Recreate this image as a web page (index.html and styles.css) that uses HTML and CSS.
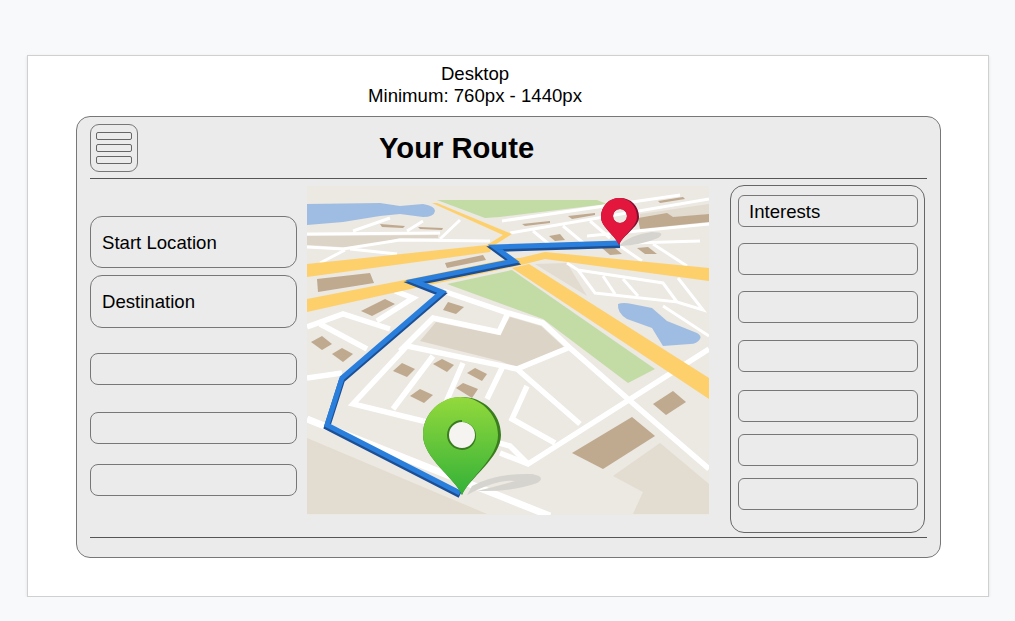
FILE: index.html
```html
<!DOCTYPE html>
<html lang="en">
<head>
    <meta charset="UTF-8">
    <title>Your Route - Desktop</title>
    <link rel="stylesheet" href="styles.css">
</head>
<body>
    <div class="sheet">
        <div class="caption">
            <div>Desktop</div>
            <div>Minimum: 760px - 1440px</div>
        </div>

        <div class="frame">
            <div class="header">
                <div class="menu-btn">
                    <span></span>
                    <span></span>
                    <span></span>
                </div>
                <h1>Your Route</h1>
            </div>

            <div class="main">
                <div class="left-col">
                    <div class="field tall">Start Location</div>
                    <div class="field tall">Destination</div>
                    <div class="field"></div>
                    <div class="field"></div>
                    <div class="field"></div>
                </div>

                <svg class="map" viewBox="0 0 402 329" width="402" height="329">
                    <defs>
                        <linearGradient id="green-pin" x1="0" y1="0" x2="0" y2="1">
                            <stop offset="0" stop-color="#93d93c"/>
                            <stop offset="1" stop-color="#33b138"/>
                        </linearGradient>
                    </defs>
                    <rect width="402" height="329" fill="#ece8e2"/>

                    <!-- water, parks, ground -->
                    <path fill="#9fbde2" d="M0 18 L73 17 L93 20 L116 18 Q128 20 128 25 Q127 31 116 31 L93 28 L73 30 L36 36 L0 39Z"/>
                    <path fill="#9fbde2" d="M311 118 Q316 116 325 118 L345 122 L360 135 L390 147 Q395 150 393 153 Q390 158 383 158 L356 160 L345 142 L320 133 Q310 127 311 118Z"/>
                    <path fill="#c3dca5" d="M130 14 L290 14 L300 18 L193 31 L178 32Z"/>
                    <path fill="#c3dca5" d="M140 98 L205 84 L348 183 L321 197 L236 133Z"/>
                    <path fill="#e3dcd0" d="M0 252 L180 328 L0 328Z"/>
                    <path fill="#e3dcd0" d="M306 290 L353 257 L402 298 L402 328 L326 328 L336 306Z"/>
                    <path fill="#ddd4c8" d="M0 50 L131 49 L131 52 L93 52 L50 62 L0 59Z"/>
                    <path fill="#ddd4c8" d="M113 155 L129 136 L192 149 L203 131 L234 140 L258 162 L210 182 L193 175Z"/>
                    <path fill="#e2dbd0" d="M228 78 L260 77 L280 110Z"/>
                    <path fill="#e2dbd0" d="M333 28 L402 18 L402 28 L333 36Z"/>

                    <!-- streets -->
                    <g fill="none" stroke="#fff" stroke-width="3">
                        <path d="M0 48 L133 47 M46 45 L83 32 M100 45 L116 35 M133 53 L153 34 M13 77 L38 64 M43 63 L90 68"/>
                        <path d="M0 61 L36 63 L93 54 L183 55"/>
                        <path d="M195 35 L373 9 M203 47 L402 13 M226 45 L248 63 M256 40 L280 60 M283 35 L303 52 M280 50 L402 38 M326 57 L393 55 M313 60 L335 75 M346 58 L380 80"/>
                        <path d="M271 84 L356 97 L370 116 L288 107Z M296 90 L308 108 M316 93 L331 110 M370 116 L396 124 L371 92 M356 120 L402 150 M260 77 L271 84"/>
                    </g>
                    <g fill="none" stroke="#fff" stroke-width="5.5">
                        <path d="M0 141 L36 128 L83 143 M13 138 L60 163 M70 135 L106 112 L88 105"/>
                        <path d="M93 165 L126 132 L192 146 L201 127 M136 105 L201 127 L236 137 L263 162 L321 213 L402 283"/>
                        <path d="M402 163 L221 278 L193 267 M100 160 L210 183 L273 238 M220 200 L205 233 L248 257 M210 183 L261 162"/>
                        <path d="M100 160 L46 218 L116 235 M126 170 L86 223 M156 177 L133 230 M196 180 L180 213 M0 192 L35 187"/>
                        <path d="M116 235 L203 260 L221 278"/>
                    </g>
                    <path fill="none" stroke="#fff" stroke-width="7" d="M0 233 L243 330"/>

                    <!-- main roads -->
                    <g fill="#fdd06c">
                        <path d="M125 17 L130 17 L205 48 L186 60 L183 66 L0 91 L0 78 L180 59 L196 49Z"/>
                        <path d="M0 113 L103 93 L205 72 L213 72 L238 66 L402 82 L402 95 L238 73 L210 80 L108 102 L0 126Z"/>
                        <path d="M205 82 L222 78 L402 192 L402 213Z"/>
                    </g>

                    <!-- blocks -->
                    <g fill="#bfa98f">
                        <path d="M138 77 L176 69 L179 74 L140 82Z"/>
                        <path d="M10 93 L63 87 L67 97 L11 106Z"/>
                        <path d="M54 125 L78 113 L88 118 L65 130Z"/>
                        <path d="M141 116 L157 121 L149 128 L136 124Z"/>
                        <path d="M4 156 L15 150 L25 158 L15 164Z"/>
                        <path d="M25 168 L35 162 L46 168 L36 176Z"/>
                        <path d="M73 38 L98 40 L96 42 L75 41Z"/>
                        <path d="M111 41 L136 42 L135 44 L113 43Z"/>
                        <path d="M215 38 L243 35 L243 37 L218 40Z"/>
                        <path d="M261 30 L288 27 L288 29 L265 33Z"/>
                        <path d="M351 15 L376 11 L378 13 L353 17Z"/>
                        <path d="M242 50 L253 48 L258 54 L248 55Z"/>
                        <path d="M295 62 L308 62 L315 68 L303 69Z"/>
                        <path d="M330 62 L341 61 L350 68 L338 68Z"/>
                        <path d="M331 32 L360 27 L366 31 L402 28 L402 36 L333 43Z"/>
                        <path d="M265 267 L325 231 L348 250 L296 283Z"/>
                        <path d="M346 218 L366 205 L379 216 L359 229Z"/>
                        <path d="M86 185 L95 177 L108 183 L100 191Z"/>
                        <path d="M126 178 L135 173 L147 179 L140 186Z"/>
                        <path d="M160 187 L168 182 L180 188 L175 195Z"/>
                        <path d="M149 202 L156 197 L171 203 L165 212Z"/>
                        <path d="M103 210 L113 203 L126 209 L117 217Z"/>
                    </g>

                    <!-- pin shadows -->
                    <path fill="#d6d4cf" d="M312 60 Q322 49 345 46 Q360 46 351 52 Q335 59 312 60Z"/>
                    <path fill="#d6d4cf" d="M165 300 Q190 287 225 288 Q240 291 230 297 Q205 306 170 305 Q190 300 208 295 Q190 293 160 309Z"/>

                    <!-- route -->
                    <path fill="none" stroke="#1c4f94" stroke-width="6" stroke-linejoin="miter" d="M153 309 L20 241 L35 194 L135 108 L107 97 L207 77 L188 63 L313 59"/>
                    <path fill="none" stroke="#2a7fdc" stroke-width="5" stroke-linejoin="miter" d="M153 307 L20 239 L35 192 L135 106 L107 95 L207 75 L188 61 L313 57"/>

                    <!-- pins -->
                    <circle cx="155" cy="249" r="14" fill="#f6f4f1"/>
                    <path fill="#7d1030" fill-rule="evenodd" d="M312 59 C308 49 294 41 294 31 C294 20 302 12 313 12 C324 12 332 20 332 31 C332 41 316 49 312 59Z M313 23 A7 7 0 1 0 313 37 A7 7 0 1 0 313 23Z"/>
                    <path fill="#e3173e" fill-rule="evenodd" d="M312 59 C308 49 294 41 294 31 C294 20 302 12 312 12 C322 12 330 20 330 31 C330 41 316 49 312 59Z M313 23 A7 7 0 1 0 313 37 A7 7 0 1 0 313 23Z"/>
                    <path fill="#3a7d1f" fill-rule="evenodd" d="M155 309 C148 292 116 272 116 249 C116 227 134 211 155 211 C176 211 194 227 194 249 C194 272 162 292 155 309Z M155 236 A13 13 0 1 0 155 262 A13 13 0 1 0 155 236Z"/>
                    <path fill="url(#green-pin)" fill-rule="evenodd" d="M155 309 C148 292 116 272 116 249 C116 227 134 211 153 211 C172 211 191 227 191 249 C191 272 162 292 155 309Z M155 234 A15 15 0 0 0 140 249 A15 15 0 0 0 155 264 A13 13 0 1 0 155 236Z"/>
                </svg>

                <div class="right-col">
                    <div class="item">Interests</div>
                    <div class="item"></div>
                    <div class="item"></div>
                    <div class="item"></div>
                    <div class="item"></div>
                    <div class="item"></div>
                    <div class="item"></div>
                </div>
            </div>
        </div>
    </div>
</body>
</html>
```

FILE: styles.css
```css
body {
    margin: 0;
    background-color: #f8f9fa;
    font-family: "Liberation Sans", Arial, sans-serif;
    color: #000;
}
.sheet {
    box-sizing: border-box;
    width: 962px;
    height: 542px;
    margin: 55px 0 0 27px;
    padding-top: 7px;
    background: white;
    border: 1px solid #d0d0d0;
    box-shadow: 0 1px 3px rgba(0,0,0,0.1);
}
.caption {
    width: 894px;
    height: 45px;
    margin-bottom: 8px;
    text-align: center;
    font-size: 18.6px;
    line-height: 22px;
}
.frame {
    box-sizing: border-box;
    width: 865px;
    height: 442px;
    margin-left: 48px;
    padding: 0 13px;
    background-color: #ebebeb;
    border: 1px solid #777;
    border-radius: 14px;
}
.header {
    display: flex;
    align-items: center;
    height: 61px;
    border-bottom: 1px solid #555;
}
.header h1 {
    margin: 2px 0 0 241px;
    font-size: 29.2px;
    font-weight: bold;
}
.menu-btn {
    box-sizing: border-box;
    display: flex;
    flex-direction: column;
    justify-content: center;
    gap: 4px;
    width: 48px;
    height: 48px;
    margin-top: 1px;
    padding: 0 5px;
    border: 1px solid #777;
    border-radius: 9px;
}
.menu-btn span {
    box-sizing: border-box;
    height: 8px;
    border: 1px solid #666;
    border-radius: 2px;
}
.main {
    display: flex;
    align-items: flex-start;
    height: 358px;
    border-bottom: 1px solid #555;
}
.left-col {
    width: 207px;
    margin-right: 10px;
    padding-top: 37px;
}
.field {
    box-sizing: border-box;
    height: 32px;
    padding-left: 11px;
    background-color: #ebebeb;
    border: 1px solid #777;
    border-radius: 8px;
    font-size: 18.6px;
}
.field.tall {
    height: 52px;
    border-radius: 12px;
    line-height: 52px;
}
.field:nth-child(2) {
    height: 53px;
    margin-top: 7px;
}
.field:nth-child(3) {
    margin-top: 25px;
}
.field:nth-child(4) {
    margin-top: 27px;
}
.field:nth-child(5) {
    margin-top: 20px;
}
.map {
    display: block;
    margin: 7px 21px 0 0;
}
.right-col {
    box-sizing: border-box;
    width: 195px;
    height: 348px;
    margin-top: 6px;
    padding: 9px 6px 0 7px;
    border: 1px solid #666;
    border-radius: 14px;
}
.item {
    box-sizing: border-box;
    height: 32px;
    margin-bottom: 16px;
    padding-left: 10px;
    border: 1px solid #777;
    border-radius: 6px;
    font-size: 18.6px;
    line-height: 31px;
}
.item:nth-child(3) {
    margin-bottom: 17px;
}
.item:nth-child(4) {
    margin-bottom: 18px;
}
.item:nth-child(5),
.item:nth-child(6) {
    margin-bottom: 12px;
}
```
